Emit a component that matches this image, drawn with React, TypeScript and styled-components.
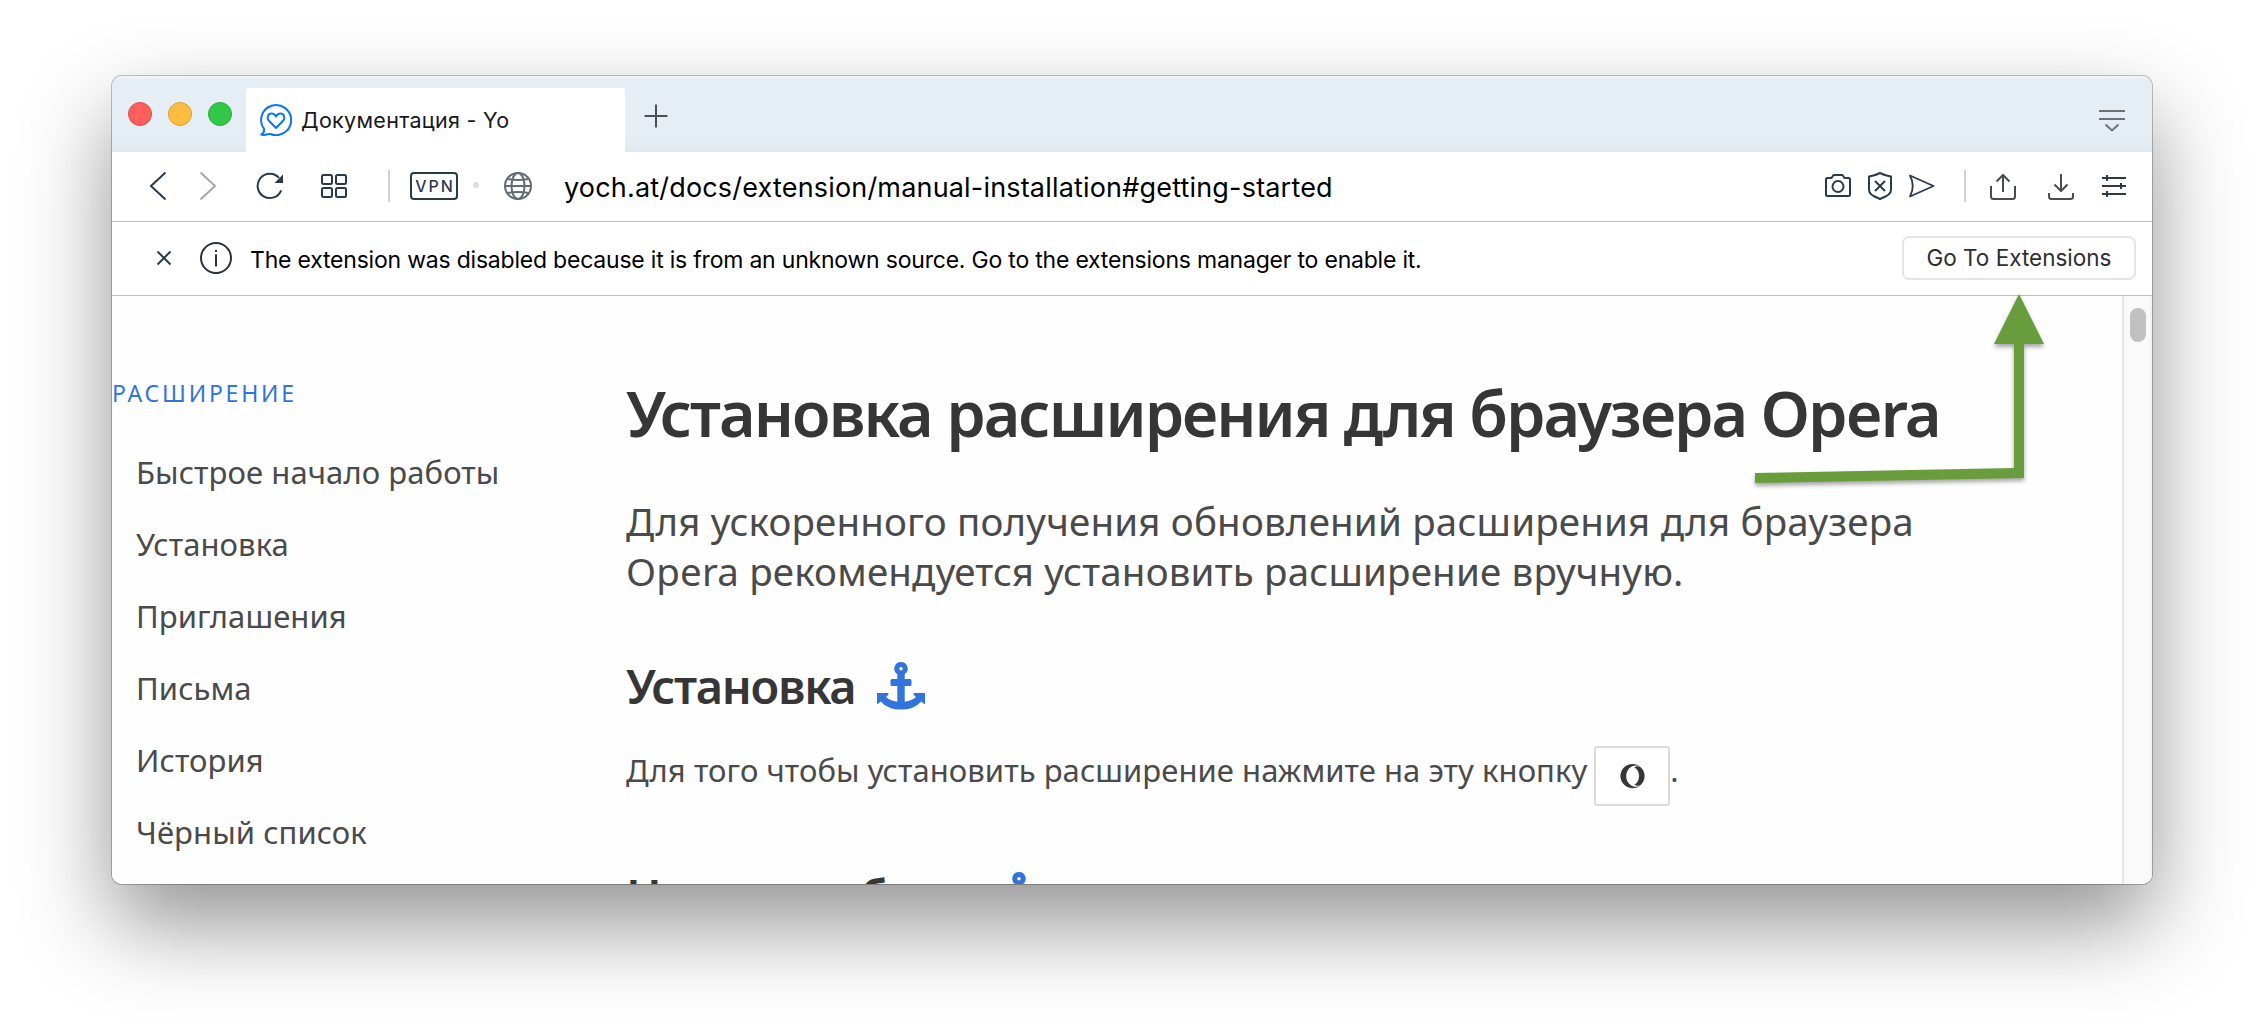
import React from "react";
import styled, { createGlobalStyle } from "styled-components";
import { FaOpera } from "react-icons/fa";

const UI = `"Inter", "Liberation Sans", sans-serif`;
const DOC = `"Noto Sans", "Open Sans", sans-serif`;
const INK = "#2b3a49";

const GlobalStyle = createGlobalStyle`
  * { box-sizing: border-box; }
  body { margin: 0; background: #fff; overflow: hidden; }
`;

const Desktop = styled.div`
  width: 2264px;
  height: 1032px;
  padding: 76px 112px 0;
  background: #fff;
  overflow: hidden;
`;

const Window = styled.div`
  position: relative;
  display: flex;
  flex-direction: column;
  width: 2040px;
  height: 808px;
  border-radius: 10px;
  background: #fff;
  box-shadow: 0 0 0 1px rgba(0, 0, 0, 0.24), 0 40px 90px rgba(0, 0, 0, 0.43);
`;

const TabStrip = styled.div`
  display: flex;
  align-items: flex-start;
  height: 76px;
  flex: none;
  border-radius: 10px 10px 0 0;
  background: linear-gradient(#f2f6fa 0, #e5edf5 4px, #e5edf5 66px, #dfe7ef 100%);
`;

const TrafficLights = styled.div`
  display: flex;
  gap: 16px;
  width: 134px;
  padding: 26px 0 0 16px;
`;

const Light = styled.span<{ $fill: string; $edge: string }>`
  width: 24px;
  height: 24px;
  border-radius: 50%;
  background: ${(p) => p.$fill};
  border: 1px solid ${(p) => p.$edge};
`;

const Tab = styled.div`
  display: flex;
  align-items: center;
  gap: 9px;
  width: 379px;
  height: 64px;
  margin-top: 12px;
  padding-left: 14px;
  border-radius: 3px 3px 0 0;
  background: #fff;
`;

const TabTitle = styled.span`
  font: 400 21.5px/30px ${UI};
  letter-spacing: 0.3px;
  color: #17191c;
  white-space: nowrap;
`;

const NewTab = styled.div`
  display: flex;
  margin: 28px auto 0 19px;
`;

const TabMenu = styled.div`
  display: flex;
  margin: 33px 26px 0 0;
`;

const Toolbar = styled.div`
  display: flex;
  align-items: center;
  flex: none;
  height: 70px;
  padding: 0 24px 1px 36px;
  border-bottom: 1px solid #b5c0c8;
`;

const Slot = styled.span<{ $ml: number }>`
  display: flex;
  flex: none;
  margin-left: ${(p) => p.$ml}px;
`;

const Separator = styled.span<{ $ml: number }>`
  width: 2px;
  height: 32px;
  margin-left: ${(p) => p.$ml}px;
  background: #cfd1d3;
`;

const VpnBadge = styled.span`
  display: flex;
  align-items: center;
  justify-content: center;
  width: 48px;
  height: 28px;
  margin-left: 20px;
  padding-left: 2px;
  border: 2px solid ${INK};
  border-radius: 4px;
  font: 500 16px/24px ${UI};
  letter-spacing: 2px;
  color: ${INK};
`;

const StatusDot = styled.span`
  width: 6px;
  height: 6px;
  margin: 0 0 3px 15px;
  border-radius: 50%;
  background: #dcdfe1;
`;

const Address = styled.span`
  margin: 0 auto 0 32px;
  padding-top: 4px;
  font: 400 27px/36px ${UI};
  letter-spacing: 0.18px;
  color: #000;
  white-space: nowrap;
`;

const InfoBar = styled.div`
  display: flex;
  align-items: center;
  flex: none;
  height: 74px;
  padding: 0 16px 1px 44px;
  border-bottom: 1px solid #b5c0c8;
`;

const InfoText = styled.span`
  margin: 0 auto 0 18px;
  padding-top: 3px;
  font: 400 23px/32px ${UI};
  letter-spacing: -0.21px;
  color: #000;
  white-space: nowrap;
`;

const InfoButton = styled.button`
  width: 234px;
  height: 44px;
  padding: 0;
  border: 2px solid #e4e5e6;
  border-radius: 7px;
  background: #fff;
  font: 400 22.5px/30px ${UI};
  color: #2c2e30;
  white-space: nowrap;
`;

const Page = styled.div`
  display: flex;
  flex: 1;
  min-height: 0;
  overflow: hidden;
  border-radius: 0 0 10px 10px;
  background: #fefefe;
`;

const Sidebar = styled.nav`
  flex: none;
  width: 514px;
  padding-top: 79px;
`;

const SidebarLabel = styled.div`
  margin-bottom: 25px;
  font: 400 23px/36px ${DOC};
  letter-spacing: 2.8px;
  color: #3273dc;
`;

const SidebarItem = styled.div`
  padding-left: 24px;
  font: 400 31px/72px ${DOC};
  letter-spacing: 0.08px;
  color: #4a4a4a;
  white-space: nowrap;
`;

const Article = styled.main`
  flex: 1;
  padding-top: 81px;
`;

const Title = styled.h1`
  margin: 0;
  font: 600 63px/72px ${DOC};
  letter-spacing: -1.93px;
  color: #363636;
  white-space: nowrap;
`;

const Subtitle = styled.p`
  margin: 47px 0 0;
  font: 400 38.5px/50px ${DOC};
  letter-spacing: 0.18px;
  color: #4a4a4a;
`;

const Section = styled.h2`
  display: flex;
  align-items: center;
  gap: 22px;
  margin: 60px 0 0;
  font: 600 47px/60px ${DOC};
  letter-spacing: -1.3px;
  color: #363636;
  white-space: nowrap;
`;

const Paragraph = styled.p`
  display: flex;
  align-items: flex-start;
  margin: 30px 0 0;
  font: 400 31px/48px ${DOC};
  letter-spacing: 0.06px;
  color: #4a4a4a;
  white-space: nowrap;
`;

const OperaButton = styled.span`
  display: flex;
  align-items: center;
  justify-content: center;
  width: 76px;
  height: 60px;
  margin-left: 7px;
  border: 2px solid #dbdbdb;
  border-radius: 4px;
  background: #fff;
  color: #363636;
`;

const ScrollTrack = styled.div`
  flex: none;
  width: 30px;
  padding: 12px 0 0 6px;
  border-left: 2px solid #e6e6e6;
  border-right: 2px solid #f3f3f3;
  background: #fafafa;
`;

const ScrollThumb = styled.div`
  width: 16px;
  height: 34px;
  border-radius: 8px;
  background: #c1c1c1;
`;

const Annotation = styled.svg`
  position: absolute;
  left: 1638px;
  top: 214px;
  filter: drop-shadow(0 3px 2px rgba(0, 0, 0, 0.35));
`;

type IconProps = { w: number; h?: number; color?: string; sw?: number; children: React.ReactNode };
const Icon = ({ w, h = 28, color = INK, sw = 2, children }: IconProps) => (
  <svg width={w} height={h} viewBox={`0 0 ${w} ${h}`} fill="none" stroke={color} strokeWidth={sw}>
    {children}
  </svg>
);

const AnchorIcon = () => (
  <svg width="48" height="48" viewBox="0 0 48 48" fill="#3273dc">
    <path
      fillRule="evenodd"
      d="M24 0a6.7 6.7 0 0 1 3.7 12.3V17H33q1.5 0 1.5 1.5v4Q34.500 24 33 24h-5.300v15.700Q35 38.700 39 35l-2.300-2.300Q36 31 37.500 31H48v10.500q-.5 1-1.500.1L44.300 39.400Q37 47.600 24 47.600T3.700 39.400L1.500 41.600Q.5 42.500 0 41.500V31H10.500Q12 31 11.300 32.700L9 35q4 3.700 11.300 4.700V24H15q-1.500 0-1.500-1.500v-4Q13.500 17 15 17h5.300v-4.700A6.700 6.700 0 0 1 24 0Zm0 5a1.700 1.700 0 1 0 0 3.400A1.700 1.700 0 0 0 24 5Z"
    />
  </svg>
);

const MENU = ["Быстрое начало работы", "Установка", "Приглашения", "Письма", "История", "Чёрный список"];

export default function App() {
  return (
    <>
      <GlobalStyle />
      <Desktop>
        <Window>
          <TabStrip>
            <TrafficLights>
              <Light $fill="#fd605c" $edge="#e24b48" />
              <Light $fill="#fdbd40" $edge="#df9f2f" />
              <Light $fill="#34c84a" $edge="#26ac36" />
            </TrafficLights>
            <Tab>
              <Icon w={32} h={32} color="#0a78f5">
                <path
                  strokeLinejoin="round"
                  d="M4.200 25.200A15 15 0 1 1 10.500 30Q8.500 29.800 6.500 30.500Q3.500 31.500 1.200 30.600Q4.500 28.500 4.200 25.200Z"
                />
                <path
                  strokeLinejoin="round"
                  d="M16 24L8.900 16.800C6.300 13.800 8 9.500 11.500 9.500C13.700 9.500 15.200 10.700 16 12.500C16.800 10.700 18.300 9.500 20.500 9.500C24 9.500 25.700 13.800 23.100 16.800Z"
                />
              </Icon>
              <TabTitle>Документация - Yo</TabTitle>
            </Tab>
            <NewTab>
              <Icon w={24} h={24} color="#4c4f52">
                <path d="M12 0.500V23.500M0.500 12H23.500" />
              </Icon>
            </NewTab>
            <TabMenu>
              <Icon w={28} h={24} color="#707376">
                <path d="M1 2H27M1 10H27M7.500 15.500L14 21.500L20.500 15.500" />
              </Icon>
            </TabMenu>
          </TabStrip>

          <Toolbar>
            <Slot $ml={0}>
              <Icon w={20}><path d="M17.500 0.500L3 14L17.500 27.500" /></Icon>
            </Slot>
            <Slot $ml={30}>
              <Icon w={20} color="#a4a9ae"><path d="M2.500 0.500L17 14L2.500 27.500" /></Icon>
            </Slot>
            <Slot $ml={38}>
              <Icon w={30}>
                <path d="M25.200 18.300A12.200 12.200 0 1 1 23 5.800" />
                <path d="M27 2.500V11H18.500Z" fill={INK} stroke="none" />
              </Icon>
            </Slot>
            <Slot $ml={34}>
              <Icon w={28}>
                <rect x="2" y="3" width="10" height="9" rx="1.500" />
                <rect x="16" y="3" width="10" height="9" rx="1.500" />
                <rect x="2" y="16" width="10" height="9" rx="1.500" />
                <rect x="16" y="16" width="10" height="9" rx="1.500" />
              </Icon>
            </Slot>
            <Separator $ml={40} />
            <VpnBadge>VPN</VpnBadge>
            <StatusDot />
            <Slot $ml={25}>
              <Icon w={28} color="#636c75">
                <circle cx="14" cy="14" r="13" />
                <ellipse cx="14" cy="14" rx="6.500" ry="13" />
                <path d="M1 14H27M3.500 7Q14 9 24.500 7M3.500 21Q14 19 24.500 21" />
              </Icon>
            </Slot>
            <Address>yoch.at/docs/extension/manual-installation#getting-started</Address>
            <Slot $ml={0}>
              <Icon w={28}>
                <path strokeLinejoin="round" d="M3.500 6H7.500L9.500 3H18.500L20.500 6H24.500Q26 6 26 7.500V22.500Q26 24 24.500 24H3.500Q2 24 2 22.500V7.500Q2 6 3.500 6Z" />
                <circle cx="14" cy="14.500" r="5.500" />
              </Icon>
            </Slot>
            <Slot $ml={14}>
              <Icon w={28}>
                <path strokeLinejoin="round" d="M14 1Q19.500 4 25 4.500V17.500Q25 21.500 20.500 24L14 27L7.500 24Q3 21.500 3 17.500V4.500Q8.500 4 14 1Z" />
                <path d="M9 9L19 19M19 9L9 19" />
              </Icon>
            </Slot>
            <Slot $ml={14}>
              <Icon w={28} sw={1.8}>
                <path strokeLinejoin="round" d="M2 3.500L25.500 14L2 24.500Q7.500 14 2 3.500Z" />
              </Icon>
            </Slot>
            <Separator $ml={28} />
            <Slot $ml={23}>
              <Icon w={28} color="#4a4d4f">
                <path d="M2 14V24.500Q2 27 4.500 27H23.500Q26 27 26 24.500V14M14 20V3.500M7.500 9.500L14 3L20.500 9.500" />
              </Icon>
            </Slot>
            <Slot $ml={30}>
              <Icon w={28} color="#4a4d4f">
                <path d="M2 21V24.500Q2 27 4.500 27H23.500Q26 27 26 24.500V21M14 2V18.500M7.500 12.500L14 19L20.500 12.500" />
              </Icon>
            </Slot>
            <Slot $ml={25}>
              <Icon w={28}>
                <path d="M2 6H26M2 14H26M2 22H26M7 3V9M21 11V17M7 19V25" />
              </Icon>
            </Slot>
          </Toolbar>

          <InfoBar>
            <Icon w={16} h={16}><path d="M1.500 1.500L14.500 14.500M14.500 1.500L1.500 14.500" /></Icon>
            <Slot $ml={28}>
              <Icon w={32} h={32} color="#28323e">
                <circle cx="16" cy="16" r="15" />
                <path d="M16 12.500V24.500M16 8V10" />
              </Icon>
            </Slot>
            <InfoText>
              The extension was disabled because it is from an unknown source. Go to the extensions manager to enable it.
            </InfoText>
            <InfoButton>Go To Extensions</InfoButton>
          </InfoBar>

          <Page>
            <Sidebar>
              <SidebarLabel>РАСШИРЕНИЕ</SidebarLabel>
              {MENU.map((label) => (
                <SidebarItem key={label}>{label}</SidebarItem>
              ))}
            </Sidebar>
            <Article>
              <Title>Установка расширения для браузера Opera</Title>
              <Subtitle>
                Для ускоренного получения обновлений расширения для браузера
                <br />
                Opera рекомендуется установить расширение вручную.
              </Subtitle>
              <Section>
                Установка
                <AnchorIcon />
              </Section>
              <Paragraph>
                <span>Для того чтобы установить расширение нажмите на эту кнопку</span>
                <OperaButton>
                  <FaOpera size={25} />
                </OperaButton>
                <span>.</span>
              </Paragraph>
              <Section>
                Начало работы
                <AnchorIcon />
              </Section>
            </Article>
            <ScrollTrack>
              <ScrollThumb />
            </ScrollTrack>
          </Page>

          <Annotation width="310" height="200" viewBox="0 0 310 200">
            <path
              fill="#699c3c"
              d="M269 4L294 54H274V188L5 193V183L264 178V54H244Z"
            />
          </Annotation>
        </Window>
      </Desktop>
    </>
  );
}
